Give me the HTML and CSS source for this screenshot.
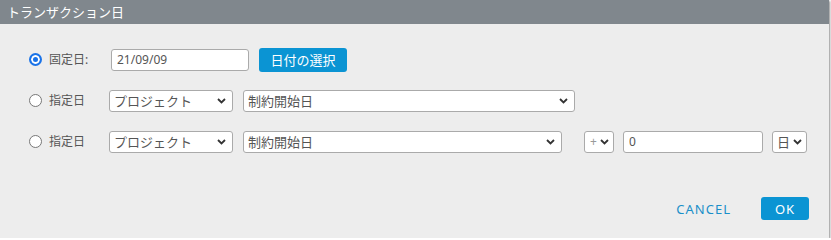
FILE: index.html
```html
<!DOCTYPE html>
<html lang="ja">

<head>
    <meta charset="UTF-8" />
    <meta name="viewport" content="width=device-width, initial-scale=1.0" />
    <title>トランザクション日</title>
    <link rel="stylesheet" href="styles.css">
</head>

<body>
    <div class="dialog">
        <div class="dialog-title">トランザクション日</div>

        <div class="dialog-body">
            <!-- 固定日 -->
            <div class="row">
                <label class="choice">
                    <span class="radio checked"></span>
                    <span class="choice-text">固定日:</span>
                </label>
                <input type="text" class="field date-field" value="21/09/09" />
                <button class="btn-primary pick-btn">日付の選択</button>
            </div>

            <!-- 指定日 -->
            <div class="row">
                <label class="choice">
                    <span class="radio"></span>
                    <span class="choice-text">指定日</span>
                </label>
                <div class="select w-project">
                    <span>プロジェクト</span>
                    <svg class="chev" width="9" height="6" viewBox="0 0 9 6"><path d="M1 1l3.5 3.5L8 1" fill="none" stroke="#333" stroke-width="1.8"/></svg>
                </div>
                <div class="select w-long">
                    <span>制約開始日</span>
                    <svg class="chev" width="9" height="6" viewBox="0 0 9 6"><path d="M1 1l3.5 3.5L8 1" fill="none" stroke="#333" stroke-width="1.8"/></svg>
                </div>
            </div>

            <!-- 指定日 + オフセット -->
            <div class="row">
                <label class="choice">
                    <span class="radio"></span>
                    <span class="choice-text">指定日</span>
                </label>
                <div class="select w-project">
                    <span>プロジェクト</span>
                    <svg class="chev" width="9" height="6" viewBox="0 0 9 6"><path d="M1 1l3.5 3.5L8 1" fill="none" stroke="#333" stroke-width="1.8"/></svg>
                </div>
                <div class="select w-mid">
                    <span>制約開始日</span>
                    <svg class="chev" width="9" height="6" viewBox="0 0 9 6"><path d="M1 1l3.5 3.5L8 1" fill="none" stroke="#333" stroke-width="1.8"/></svg>
                </div>
                <div class="select w-sign">
                    <span class="sign">+</span>
                    <svg class="chev" width="9" height="6" viewBox="0 0 9 6"><path d="M1 1l3.5 3.5L8 1" fill="none" stroke="#333" stroke-width="1.8"/></svg>
                </div>
                <input type="text" class="field num-field" value="0" />
                <div class="select w-unit">
                    <span>日</span>
                    <svg class="chev" width="9" height="6" viewBox="0 0 9 6"><path d="M1 1l3.5 3.5L8 1" fill="none" stroke="#333" stroke-width="1.8"/></svg>
                </div>
            </div>
        </div>

        <div class="dialog-footer">
            <button class="btn-text">CANCEL</button>
            <button class="btn-primary ok-btn">OK</button>
        </div>
    </div>
</body>

</html>
```

FILE: styles.css
```css
* {
    box-sizing: border-box;
    margin: 0;
    padding: 0;
}

body {
    font-family: "Noto Sans", "Noto Sans CJK JP", sans-serif;
    background: #ffffff;
    color: #555;
}

.dialog {
    width: 829px;
    height: 238px;
    background: #ededed;
    box-shadow: 1px 1px 2px rgba(0, 0, 0, 0.45);
    display: flex;
    flex-direction: column;
}

.dialog-title {
    height: 24px;
    line-height: 24px;
    padding-left: 7px;
    background: #80878d;
    color: #fff;
    font-size: 13px;
}

.dialog-body {
    padding: 24px 0 0 29px;
    display: flex;
    flex-direction: column;
    gap: 18px;
}

.row {
    display: flex;
    align-items: center;
    height: 23px;
}

.choice {
    width: 80px;
    display: flex;
    align-items: center;
    gap: 7px;
    font-size: 12px;
    color: #555;
}

.choice-text {
    line-height: 16px;
}

.radio {
    width: 13px;
    height: 13px;
    border-radius: 50%;
    border: 1px solid #777;
    background: #fff;
    flex-shrink: 0;
}

.radio.checked {
    border: 2px solid #1a73e8;
    box-shadow: inset 0 0 0 2px #fff;
    background: #1a73e8;
}

.field {
    height: 22px;
    border: 1px solid #aaa;
    border-radius: 3px;
    background: #fff;
    padding: 0 5px;
    font-family: inherit;
    font-size: 12px;
    color: #555;
    outline: none;
}

.date-field {
    width: 138px;
    margin-left: 2px;
}

.num-field {
    width: 140px;
    margin-left: 9px;
}

.btn-primary {
    border: none;
    border-radius: 3px;
    background: #0b94d3;
    color: #fff;
    font-family: inherit;
    cursor: pointer;
}

.pick-btn {
    width: 88px;
    height: 24px;
    margin-left: 10px;
    font-size: 13px;
}

.select {
    height: 22px;
    border: 1px solid #aaa;
    border-radius: 3px;
    background: #fff;
    display: flex;
    align-items: center;
    justify-content: space-between;
    padding: 0 6px 0 4px;
    font-size: 13px;
    color: #555;
}

.chev {
    flex-shrink: 0;
}

.w-project {
    width: 124px;
}

.w-long {
    width: 332px;
    margin-left: 10px;
}

.w-mid {
    width: 319px;
    margin-left: 10px;
}

.w-sign {
    width: 30px;
    margin-left: 22px;
    padding: 0 4px 0 5px;
}

.sign {
    color: #999;
    font-size: 12px;
}

.w-unit {
    width: 35px;
    margin-left: 9px;
    padding: 0 4px 0 4px;
}

.dialog-footer {
    margin-top: auto;
    display: flex;
    justify-content: flex-end;
    align-items: center;
    gap: 30px;
    padding: 0 20px 18px 0;
}

.btn-text {
    border: none;
    background: none;
    color: #1a8fc9;
    font-family: "Noto Sans", sans-serif;
    font-size: 13px;
    letter-spacing: 1px;
    cursor: pointer;
}

.ok-btn {
    width: 48px;
    height: 23px;
    font-size: 13px;
    letter-spacing: 1px;
}
```
